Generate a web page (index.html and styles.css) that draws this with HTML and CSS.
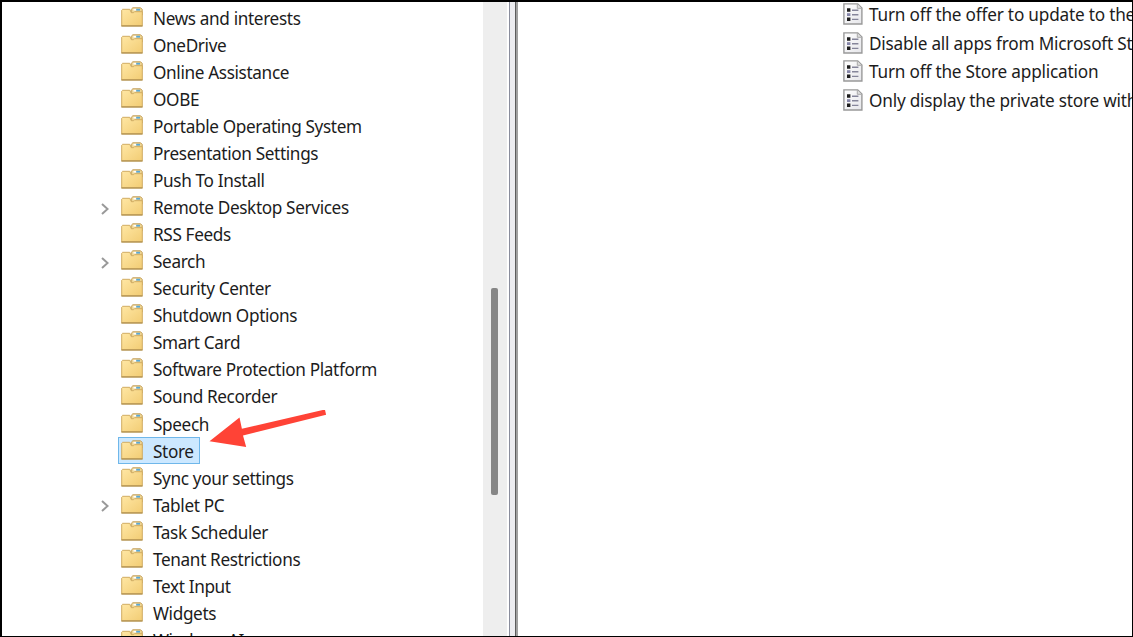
FILE: index.html
```
<!DOCTYPE html>
<html lang="en">
<head>
  <meta charset="UTF-8" />
  <meta name="viewport" content="width=device-width, initial-scale=1.0"/>
  <title>Local Group Policy Editor</title>
  <link rel="stylesheet" href="styles.css">
</head>
<body>
  <svg class="sprite" aria-hidden="true">
    <defs>
      <linearGradient id="folder-fill" x1="0" y1="0" x2="1" y2="1">
        <stop offset="0" stop-color="#ffe7a4"/>
        <stop offset="1" stop-color="#f2cc74"/>
      </linearGradient>
      <linearGradient id="page-fill" x1="0" y1="0" x2="1" y2="1">
        <stop offset="0" stop-color="#ffffff"/>
        <stop offset="1" stop-color="#e6e6ea"/>
      </linearGradient>
    </defs>
    <symbol id="folder" viewBox="0 0 22 20">
      <path d="M10.2 6V2.4L11.8.8h7.8l1.6 1.6V8h-11z" fill="#eed592" stroke="#c29d58" stroke-width="1"/>
      <path d="M12.4 2.7h3" stroke="#fff" stroke-width="1.8"/>
      <path d="M15.2 2.7h3.8" stroke="#58a8d8" stroke-width="1.8"/>
      <path d="M.7 3.2 1.6 2.3h7.2l1.5 3.4h2.3l1-1h7.7v14.1H.7z" fill="url(#folder-fill)" stroke="#d0ac62" stroke-width="1"/>
      <path d="M.3 19h21.3" stroke="#ae8c48" stroke-width="1.2"/>
    </symbol>
    <symbol id="arrow" viewBox="0 0 8 12">
      <path d="M1 1l5.6 5L1 11" fill="none" stroke="#999" stroke-width="2"/>
    </symbol>
    <symbol id="policy" viewBox="0 0 20 22">
      <path d="M.9.9h13.8l4.2 4.2v15.9H.9z" fill="url(#page-fill)" stroke="#999" stroke-width="1.4"/>
      <path d="M14.3 1v4.3h4.3" fill="#dedede" stroke="#aaa" stroke-width="1"/>
      <path d="M4 5.3h3.4v3.4H4zM4 14.6h3.4V18H4z" fill="#1c1c1c"/>
      <path d="M4 10.2h3.4V13H4z" fill="#8585a8"/>
      <path d="M9 7.2h6.4M9 11.7h6.4M9 16.4h6.4" stroke="#85859a" stroke-width="1.4"/>
    </symbol>
  </svg>

  <div class="window">
    <div class="tree">
      <div class="node"><span class="toggle"></span><span class="item"><svg class="folder"><use href="#folder"/></svg>NetMeeting</span></div>
      <div class="node"><span class="toggle"></span><span class="item"><svg class="folder"><use href="#folder"/></svg>News and interests</span></div>
      <div class="node"><span class="toggle"></span><span class="item"><svg class="folder"><use href="#folder"/></svg>OneDrive</span></div>
      <div class="node"><span class="toggle"></span><span class="item"><svg class="folder"><use href="#folder"/></svg>Online Assistance</span></div>
      <div class="node"><span class="toggle"></span><span class="item"><svg class="folder"><use href="#folder"/></svg>OOBE</span></div>
      <div class="node"><span class="toggle"></span><span class="item"><svg class="folder"><use href="#folder"/></svg>Portable Operating System</span></div>
      <div class="node"><span class="toggle"></span><span class="item"><svg class="folder"><use href="#folder"/></svg>Presentation Settings</span></div>
      <div class="node"><span class="toggle"></span><span class="item"><svg class="folder"><use href="#folder"/></svg>Push To Install</span></div>
      <div class="node"><span class="toggle"><svg class="chevron"><use href="#arrow"/></svg></span><span class="item"><svg class="folder"><use href="#folder"/></svg>Remote Desktop Services</span></div>
      <div class="node"><span class="toggle"></span><span class="item"><svg class="folder"><use href="#folder"/></svg>RSS Feeds</span></div>
      <div class="node"><span class="toggle"><svg class="chevron"><use href="#arrow"/></svg></span><span class="item"><svg class="folder"><use href="#folder"/></svg>Search</span></div>
      <div class="node"><span class="toggle"></span><span class="item"><svg class="folder"><use href="#folder"/></svg>Security Center</span></div>
      <div class="node"><span class="toggle"></span><span class="item"><svg class="folder"><use href="#folder"/></svg>Shutdown Options</span></div>
      <div class="node"><span class="toggle"></span><span class="item"><svg class="folder"><use href="#folder"/></svg>Smart Card</span></div>
      <div class="node"><span class="toggle"></span><span class="item"><svg class="folder"><use href="#folder"/></svg>Software Protection Platform</span></div>
      <div class="node"><span class="toggle"></span><span class="item"><svg class="folder"><use href="#folder"/></svg>Sound Recorder</span></div>
      <div class="node"><span class="toggle"></span><span class="item"><svg class="folder"><use href="#folder"/></svg>Speech</span></div>
      <div class="node"><span class="toggle"></span><span class="item selected"><svg class="folder"><use href="#folder"/></svg>Store</span></div>
      <div class="node"><span class="toggle"></span><span class="item"><svg class="folder"><use href="#folder"/></svg>Sync your settings</span></div>
      <div class="node"><span class="toggle"><svg class="chevron"><use href="#arrow"/></svg></span><span class="item"><svg class="folder"><use href="#folder"/></svg>Tablet PC</span></div>
      <div class="node"><span class="toggle"></span><span class="item"><svg class="folder"><use href="#folder"/></svg>Task Scheduler</span></div>
      <div class="node"><span class="toggle"></span><span class="item"><svg class="folder"><use href="#folder"/></svg>Tenant Restrictions</span></div>
      <div class="node"><span class="toggle"></span><span class="item"><svg class="folder"><use href="#folder"/></svg>Text Input</span></div>
      <div class="node"><span class="toggle"></span><span class="item"><svg class="folder"><use href="#folder"/></svg>Widgets</span></div>
      <div class="node"><span class="toggle"></span><span class="item"><svg class="folder"><use href="#folder"/></svg>Windows AI</span></div>
    </div>

    <div class="scrollbar"><div class="thumb"></div></div>
    <div class="splitter"></div>

    <div class="settings">
      <div class="setting"><svg class="policy"><use href="#policy"/></svg>Turn off the offer to update to the latest version of Windows</div>
      <div class="setting"><svg class="policy"><use href="#policy"/></svg>Disable all apps from Microsoft Store</div>
      <div class="setting"><svg class="policy"><use href="#policy"/></svg>Turn off the Store application</div>
      <div class="setting"><svg class="policy"><use href="#policy"/></svg>Only display the private store within the Microsoft Store</div>
    </div>

    <svg class="pointer" viewBox="0 0 120 40">
      <path d="M1.5 31.2 31.5 7.5l2.4 11.3 83-19.3 1.2 5.2L35 25.6l3.2 11.5z" fill="#ff4336"/>
    </svg>
  </div>
</body>
</html>
```
FILE: styles.css
```
body {
  margin: 0;
  background-color: #fff;
  font-family: "Noto Sans", "Open Sans", sans-serif;
  font-size: 17.2px;
  letter-spacing: -0.36px;
  color: #1c1c1c;
}

.sprite {
  position: absolute;
  width: 0;
  height: 0;
}

.window {
  position: relative;
  box-sizing: border-box;
  display: flex;
  width: 1133px;
  height: 637px;
  border: solid #000;
  border-width: 2px 1px 1px 2px;
  overflow: hidden;
}

/* left tree */
.tree {
  flex: none;
  width: 481px;
  margin-top: -24.5px;
}

.node {
  display: flex;
  align-items: center;
  height: 27.04px;
  padding-left: 99px;
  white-space: nowrap;
}

.toggle {
  display: flex;
  width: 17px;
}

.chevron {
  width: 8px;
  height: 12px;
  margin-top: 3px;
}

.item {
  display: flex;
  align-items: center;
  box-sizing: border-box;
  height: 27px;
  padding: 1px 5px 0 2px;
  border: 1px solid transparent;
}

.item.selected {
  background-color: #cce8ff;
  border-color: #6fb7ea;
}

.folder {
  width: 22px;
  height: 20px;
  margin: -3px 10px 0 0;
}

/* scrollbar and splitter */
.scrollbar {
  flex: none;
  width: 24px;
  padding-left: 8px;
  box-sizing: border-box;
  background-color: #eee;
}

.thumb {
  width: 7px;
  height: 207px;
  margin-top: 286px;
  border-radius: 2px;
  background-color: #868686;
}

.splitter {
  flex: none;
  box-sizing: border-box;
  width: 9px;
  margin-left: 2px;
  border-left: 1px solid #8a8d9c;
  border-right: 2px solid #a0a0a0;
  background: linear-gradient(to right, #ececf0 5px, #5c5c5c 5px);
}

/* right list */
.settings {
  flex: 1;
  min-width: 0;
  padding: 0 0 0 325px;
  margin-top: -1.5px;
  letter-spacing: -0.2px;
  overflow: hidden;
}

.setting {
  display: flex;
  align-items: center;
  height: 28.5px;
  white-space: nowrap;
}

.policy {
  flex: none;
  width: 20px;
  height: 22px;
  margin: -1px 6px 0 0;
}

/* red arrow over the tree */
.pointer {
  position: absolute;
  left: 206px;
  top: 408px;
  width: 120px;
  height: 40px;
}
```
